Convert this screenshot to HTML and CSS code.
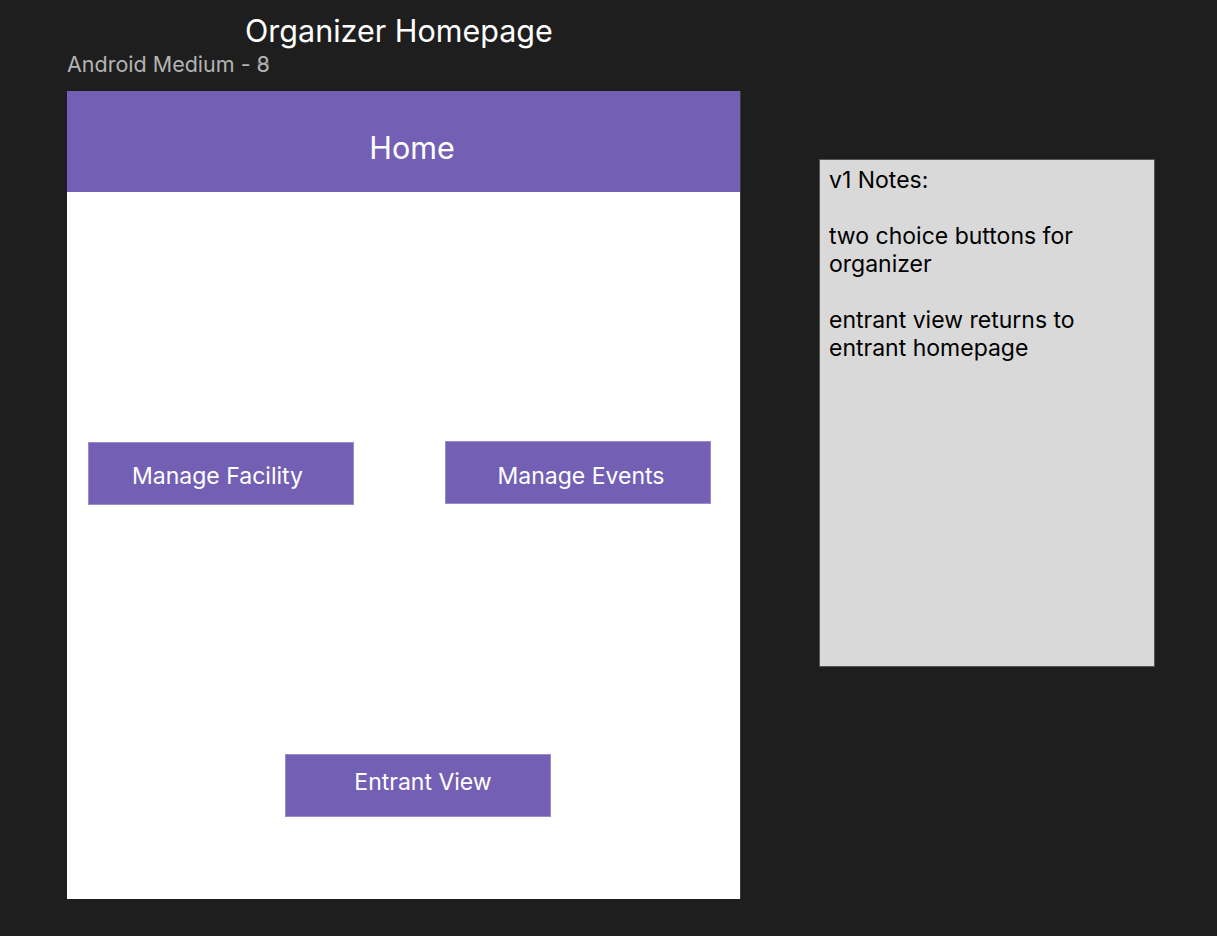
FILE: index.html
```html
<!DOCTYPE html>
<html>
<head>
<meta charset="utf-8">
<link rel="stylesheet" href="styles.css">
</head>
<body>
<div class="canvas">
  <div class="left">
    <div class="title">Organizer Homepage</div>
    <div class="label">Android Medium - <span class="ghost"><span class="g1">8</span><span class="g2">0</span></span></div>
    <div class="frame">
      <div class="header">Home</div>
      <div class="content">
        <div class="row">
          <div class="btn btn-a">Manage Facility</div>
          <div class="btn btn-b">Manage Events</div>
        </div>
        <div class="btn btn-c">Entrant View</div>
      </div>
    </div>
  </div>
  <div class="notes">
    <p>v1 Notes:</p>
    <p>two choice buttons for organizer</p>
    <p>entrant view returns to entrant homepage</p>
  </div>
</div>
</body>
</html>
```

FILE: styles.css
```css
html, body {
  margin: 0;
  padding: 0;
  background: #1e1e1e;
  font-family: Inter, "Noto Sans", sans-serif;
}
.canvas {
  display: flex;
  align-items: flex-start;
  padding: 12px 0 0 67px;
  height: 924px;
  overflow: hidden;
}
.left {
  display: flex;
  flex-direction: column;
  width: 674px;
}
.title {
  color: #ffffff;
  font-size: 30.5px;
  line-height: 38px;
  padding-left: 178px;
}
.label {
  color: #b3b3b3;
  font-size: 21.5px;
  line-height: 28px;
  margin-bottom: 13px;
}
.ghost {
  position: relative;
  display: inline-block;
}
.g2 {
  position: absolute;
  left: 0;
  top: 0;
  opacity: 0.3;
}
.frame {
  width: 673px;
  height: 808px;
  background: #ffffff;
  border-right: 1px solid #3a3a3a;
  display: flex;
  flex-direction: column;
}
.header {
  height: 101px;
  background: #7360b5;
  color: #ffffff;
  font-size: 30.5px;
  display: flex;
  align-items: center;
  justify-content: center;
  padding-left: 17px;
  padding-top: 12px;
  box-sizing: border-box;
}
.content {
  flex: 1;
  display: flex;
  flex-direction: column;
}
.row {
  display: flex;
  align-items: flex-start;
  margin-top: 249px;
  padding-left: 21px;
  gap: 91px;
}
.btn {
  width: 266px;
  height: 63px;
  background: #7360b5;
  color: #ffffff;
  font-size: 23px;
  display: flex;
  align-items: center;
  justify-content: center;
  box-sizing: border-box;
  border: 1px solid #9a8ad0;
}
.btn-a {
  margin-top: 1px;
  padding-top: 5px;
  padding-right: 7px;
}
.btn-b {
  padding-top: 7px;
  padding-left: 6px;
}
.btn-c {
  margin-top: 249px;
  margin-left: 218px;
  padding-bottom: 8px;
  padding-left: 10px;
}
.notes {
  margin-left: 78px;
  margin-top: 147px;
  width: 336px;
  height: 508px;
  box-sizing: border-box;
  background: #d9d9d9;
  border: 1px solid #555555;
  padding: 6px 9px;
  color: #000000;
  font-size: 23px;
  line-height: 28px;
}
.notes p {
  margin: 0 0 28px 0;
}
```
